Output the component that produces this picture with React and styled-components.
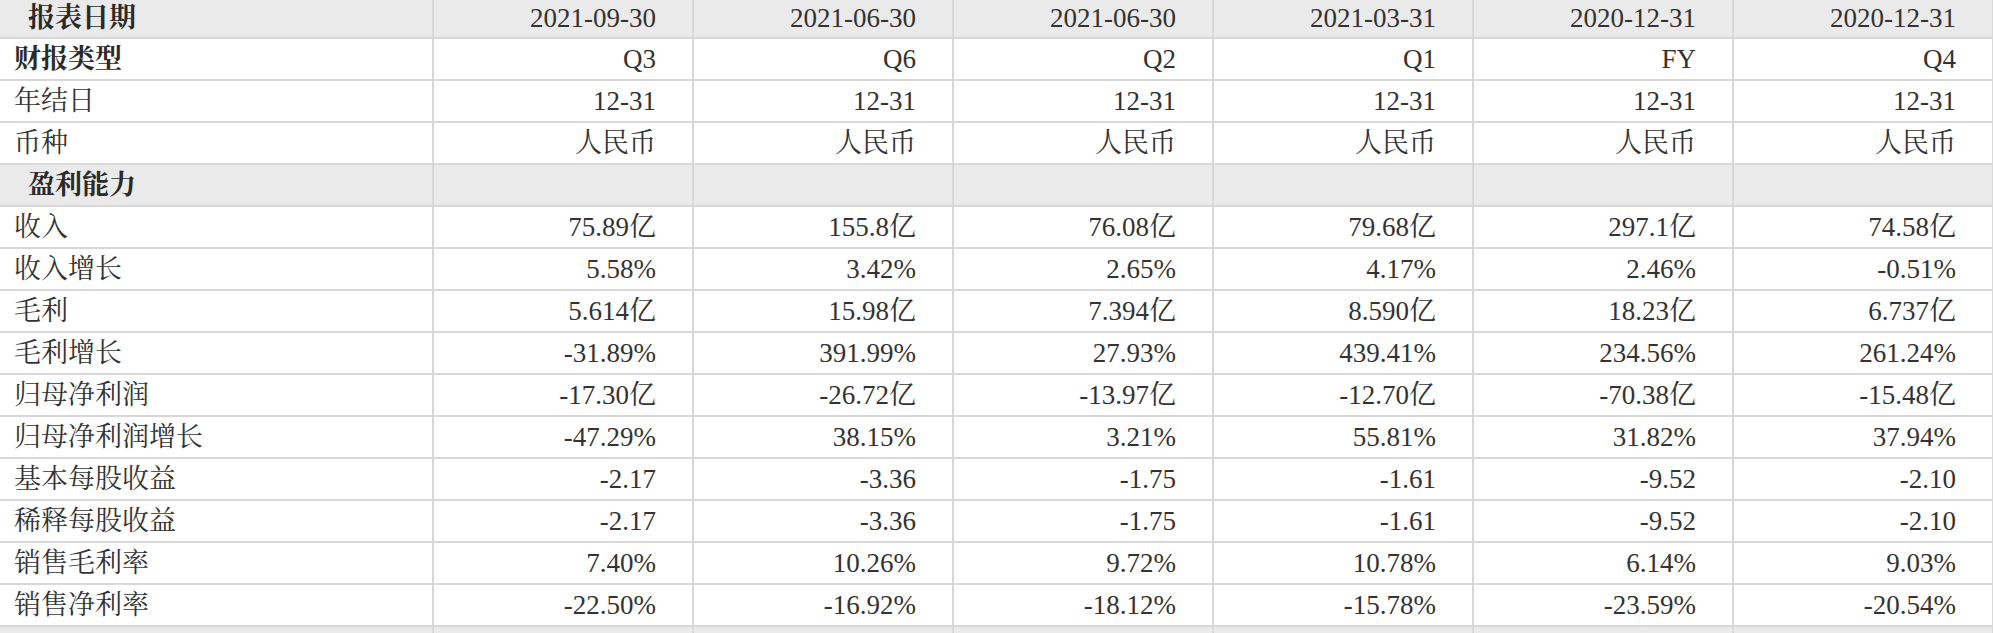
import React from "react";
import styled, { createGlobalStyle } from "styled-components";

const GlobalStyle = createGlobalStyle`
  html, body {
    margin: 0;
    padding: 0;
    background: #ffffff;
  }
  body {
    font-family: "Liberation Serif", "Noto Serif CJK SC", "Noto Sans CJK SC", serif;
    color: #333333;
  }
`;

const periods = [
  { date: "2021-09-30", type: "Q3" },
  { date: "2021-06-30", type: "Q6" },
  { date: "2021-06-30", type: "Q2" },
  { date: "2021-03-31", type: "Q1" },
  { date: "2020-12-31", type: "FY" },
  { date: "2020-12-31", type: "Q4" },
];

const metrics = [
  ["收入", ["75.89亿", "155.8亿", "76.08亿", "79.68亿", "297.1亿", "74.58亿"]],
  ["收入增长", ["5.58%", "3.42%", "2.65%", "4.17%", "2.46%", "-0.51%"]],
  ["毛利", ["5.614亿", "15.98亿", "7.394亿", "8.590亿", "18.23亿", "6.737亿"]],
  ["毛利增长", ["-31.89%", "391.99%", "27.93%", "439.41%", "234.56%", "261.24%"]],
  ["归母净利润", ["-17.30亿", "-26.72亿", "-13.97亿", "-12.70亿", "-70.38亿", "-15.48亿"]],
  ["归母净利润增长", ["-47.29%", "38.15%", "3.21%", "55.81%", "31.82%", "37.94%"]],
  ["基本每股收益", ["-2.17", "-3.36", "-1.75", "-1.61", "-9.52", "-2.10"]],
  ["稀释每股收益", ["-2.17", "-3.36", "-1.75", "-1.61", "-9.52", "-2.10"]],
  ["销售毛利率", ["7.40%", "10.26%", "9.72%", "10.78%", "6.14%", "9.03%"]],
  ["销售净利率", ["-22.50%", "-16.92%", "-18.12%", "-15.78%", "-23.59%", "-20.54%"]],
];

const Table = styled.table`
  width: 1994px;
  table-layout: fixed;
  border-collapse: separate;
  border-spacing: 0;
  font-size: 27px;
  line-height: 1;
`;

const LabelCol = styled.col`
  width: 434px;
`;

const DataCol = styled.col`
  width: 260px;
`;

const Row = styled.tr`
  background: ${(p) => (p.$shaded ? "#eaeaea" : "#ffffff")};
`;

const Cell = styled.td`
  box-sizing: border-box;
  height: ${(p) => (p.$short ? "39px" : "42px")};
  padding: 0 36px 0 0;
  border-right: 2px solid #d8d8d8;
  border-bottom: 2px solid #d8d8d8;
  text-align: right;
  white-space: nowrap;
  vertical-align: middle;
  overflow: hidden;
  font-weight: 400;
`;

const Label = styled(Cell)`
  text-align: left;
  padding: 0 0 0 ${(p) => (p.$indent ? "28px" : "14px")};
  font-weight: ${(p) => (p.$strong ? 700 : 400)};
  color: ${(p) => (p.$strong ? "#2a2a2a" : "#333333")};
`;

const SectionRow = ({ title }) => (
  <Row $shaded>
    <Label $indent $strong>
      {title}
    </Label>
    {periods.map((_, i) => (
      <Cell key={i} />
    ))}
  </Row>
);

export default function App() {
  return (
    <>
      <GlobalStyle />
      <Table>
        <colgroup>
          <LabelCol />
          {periods.map((_, i) => (
            <DataCol key={i} />
          ))}
        </colgroup>
        <tbody>
          <Row $shaded>
            <Label as="th" $short $indent $strong>
              报表日期
            </Label>
            {periods.map((p, i) => (
              <Cell as="th" key={i} $short>
                {p.date}
              </Cell>
            ))}
          </Row>
          <Row>
            <Label $strong>财报类型</Label>
            {periods.map((p, i) => (
              <Cell key={i}>{p.type}</Cell>
            ))}
          </Row>
          <Row>
            <Label>年结日</Label>
            {periods.map((_, i) => (
              <Cell key={i}>12-31</Cell>
            ))}
          </Row>
          <Row>
            <Label>币种</Label>
            {periods.map((_, i) => (
              <Cell key={i}>人民币</Cell>
            ))}
          </Row>
          <SectionRow title="盈利能力" />
          {metrics.map(([name, values]) => (
            <Row key={name}>
              <Label>{name}</Label>
              {values.map((v, i) => (
                <Cell key={i}>{v}</Cell>
              ))}
            </Row>
          ))}
          <SectionRow title="" />
        </tbody>
      </Table>
    </>
  );
}
